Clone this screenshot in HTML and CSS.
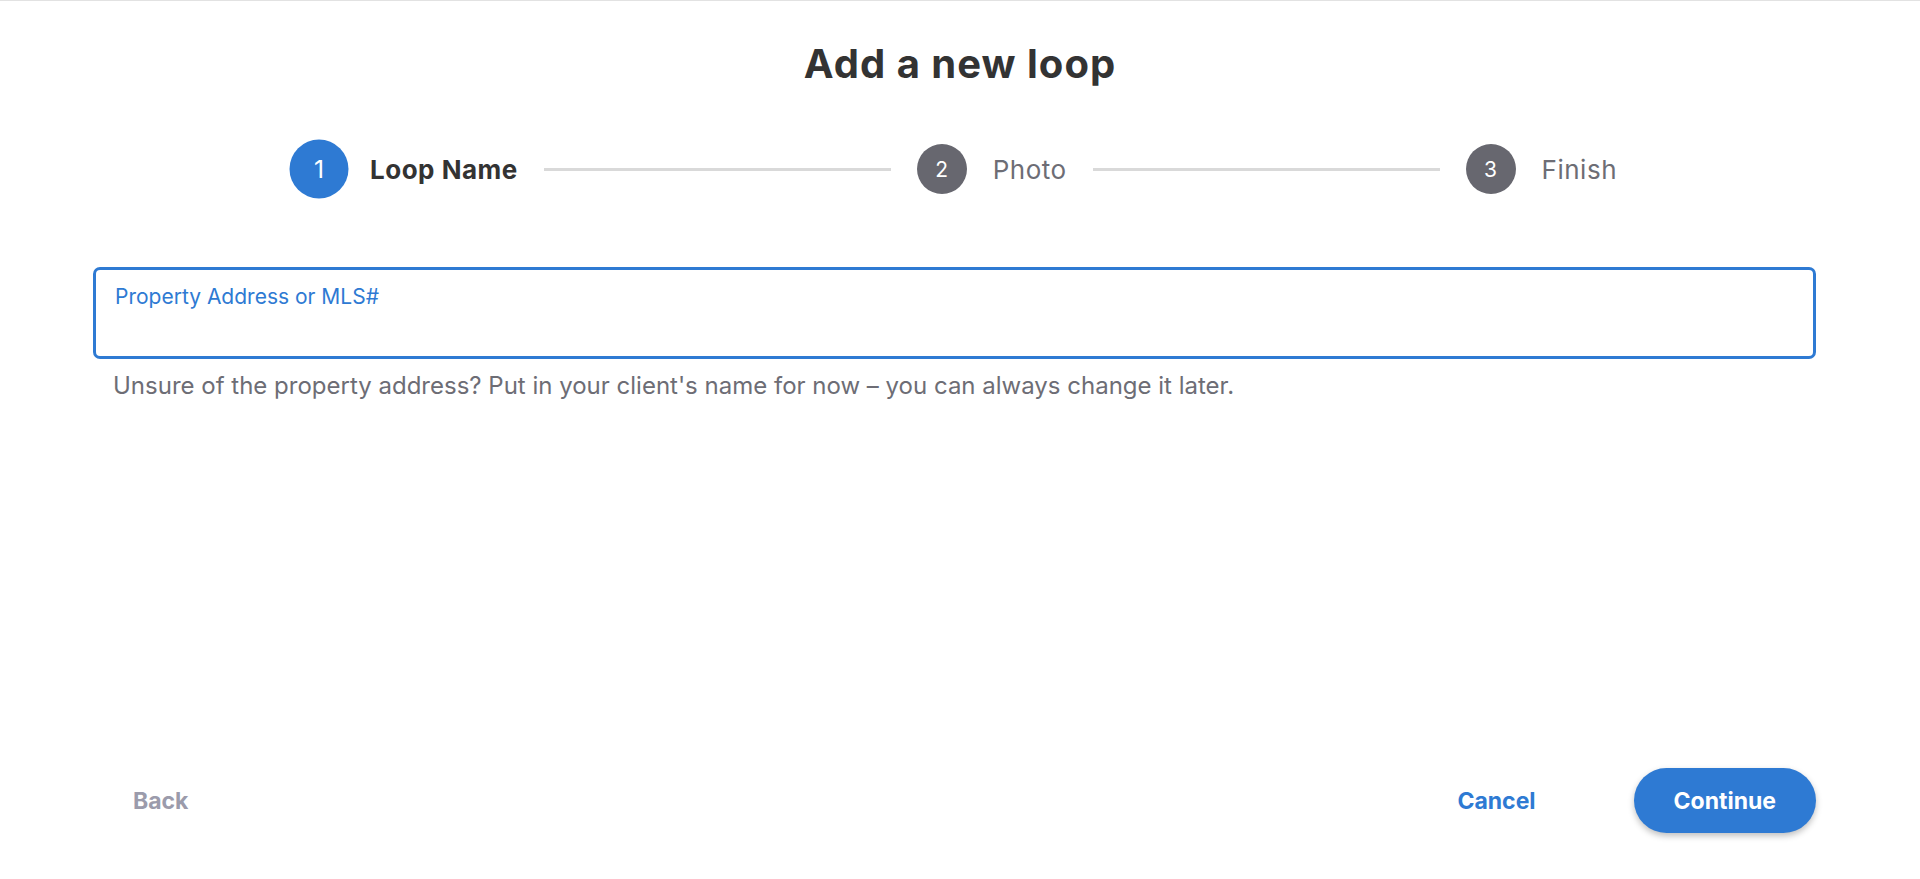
FILE: index.html
```html
<!DOCTYPE html>
<html lang="en">
<head>
<meta charset="utf-8">
<title>Add a new loop</title>
<link rel="stylesheet" href="styles.css">
</head>
<body>
<div class="page">
  <h1 class="title">Add a new loop</h1>
  <div class="stepper">
    <div class="step step-active">
      <span class="step-num">1</span>
      <span class="step-label">Loop Name</span>
    </div>
    <div class="step-line"></div>
    <div class="step">
      <span class="step-num">2</span>
      <span class="step-label">Photo</span>
    </div>
    <div class="step-line"></div>
    <div class="step">
      <span class="step-num">3</span>
      <span class="step-label">Finish</span>
    </div>
  </div>
  <div class="form">
    <label class="field">
      <span class="field-label">Property Address or MLS#</span>
      <input class="field-input" type="text">
    </label>
    <p class="helper">Unsure of the property address? Put in your client's name for now – you can always change it later.</p>
  </div>
  <div class="spacer"></div>
  <div class="actions">
    <button class="btn btn-back">Back</button>
    <div class="actions-right">
      <button class="btn btn-cancel">Cancel</button>
      <button class="btn btn-primary">Continue</button>
    </div>
  </div>
</div>
</body>
</html>
```
FILE: styles.css
```css
* { box-sizing: border-box; }
html, body {
  margin: 0;
  height: 100%;
  background: #ffffff;
  font-family: "Inter", "Lato", sans-serif;
}
.page {
  height: 879px;
  border-top: 1px solid #e2e2e2;
  display: flex;
  flex-direction: column;
}
.title {
  margin: 40px 0 0;
  text-align: center;
  font-size: 40px;
  line-height: 46px;
  letter-spacing: 1px;
  font-weight: 700;
  color: #333333;
}
.stepper {
  margin-top: 52px;
  height: 60px;
  display: flex;
  align-items: center;
  gap: 26px;
  padding: 0 303px 0 294px;
}
.step {
  display: flex;
  align-items: center;
  gap: 26px;
}
.step-num {
  width: 50px;
  height: 50px;
  border-radius: 50%;
  background: #67676f;
  color: #ffffff;
  display: flex;
  align-items: center;
  justify-content: center;
  font-size: 21px;
  font-weight: 400;
}
.step-active .step-num {
  background: #2e7ad3;
  transform: scale(1.18);
}
.step-label {
  font-size: 26px;
  letter-spacing: 0.5px;
  color: #6d6d75;
  font-weight: 400;
}
.step-active .step-label {
  color: #333333;
  font-weight: 700;
}
.step-line {
  flex: 1;
  height: 3px;
  background: #d9d9d9;
}
.form {
  margin-top: 68px;
  padding: 0 104px 0 93px;
}
.field {
  display: block;
  height: 92px;
  border: 3px solid #2e7ad3;
  border-radius: 7px;
  padding: 15px 19px 0;
}
.field-label {
  display: block;
  font-size: 21px;
  line-height: 24px;
  color: #2e7ad3;
}
.field-input {
  display: block;
  width: 100%;
  border: 0;
  outline: none;
  padding: 0;
  margin-top: 3px;
  height: 30px;
  font-family: inherit;
  font-size: 20px;
  background: transparent;
}
.helper {
  margin: 13px 0 0;
  padding-left: 20px;
  font-size: 24px;
  line-height: 28px;
  color: #6d6d75;
}
.spacer { flex: 1; }
.actions {
  display: flex;
  align-items: center;
  justify-content: space-between;
  padding: 0 104px 0 93px;
  margin-bottom: 46px;
}
.actions-right {
  display: flex;
  align-items: center;
  gap: 58px;
}
.btn {
  height: 65px;
  padding: 0 40px;
  border: 0;
  background: transparent;
  font-family: inherit;
  font-size: 23px;
  font-weight: 700;
  cursor: pointer;
}
.btn-back { color: #9b9bab; }
.btn-cancel { color: #2e7ad3; }
.btn-primary {
  background: #2e7ad3;
  color: #ffffff;
  border-radius: 33px;
  box-shadow: 0 3px 6px rgba(0, 0, 0, 0.25);
}
```
